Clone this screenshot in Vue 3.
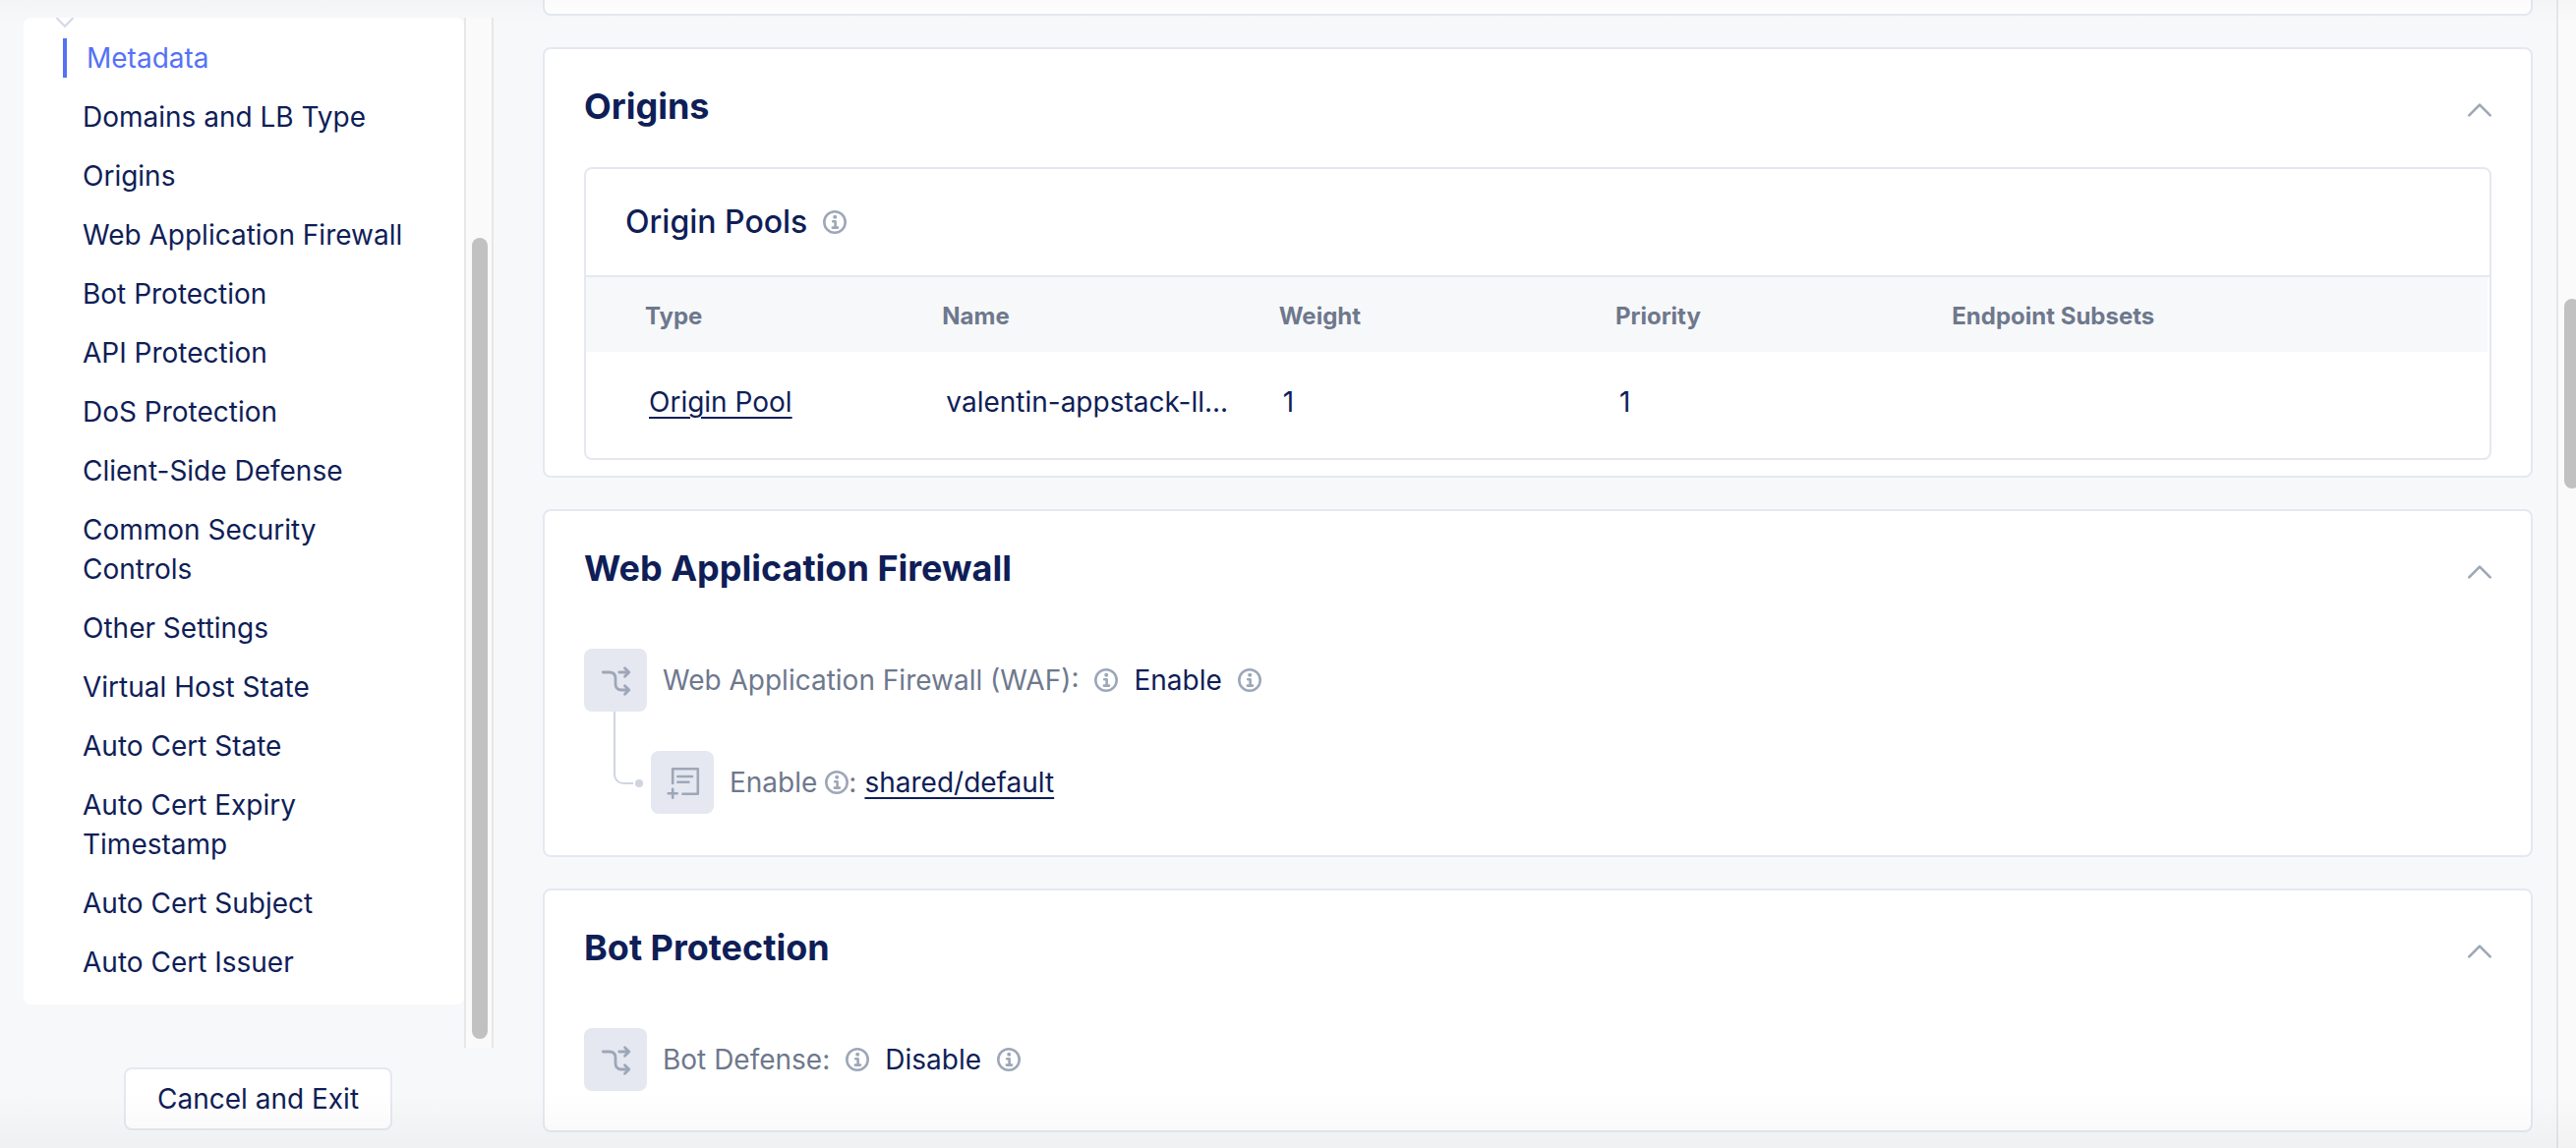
<script setup>
import { h } from 'vue'

const links = [
  'Metadata',
  'Domains and LB Type',
  'Origins',
  'Web Application Firewall',
  'Bot Protection',
  'API Protection',
  'DoS Protection',
  'Client-Side Defense',
  'Common Security Controls',
  'Other Settings',
  'Virtual Host State',
  'Auto Cert State',
  'Auto Cert Expiry Timestamp',
  'Auto Cert Subject',
  'Auto Cert Issuer',
]
const active = 'Metadata'

const columns = ['Type', 'Name', 'Weight', 'Priority', 'Endpoint Subsets']
const pools = [
  { type: 'Origin Pool', name: 'valentin-appstack-ll...', weight: 1, priority: 1, subsets: '' },
]

const slug = (text) => text.toLowerCase().replace(/[^a-z]+/g, '-')

const line = { fill: 'none', stroke: 'currentColor', 'stroke-linecap': 'round', 'stroke-linejoin': 'round' }

const InfoIcon = () =>
  h('svg', { width: 24, height: 24, viewBox: '0 0 24 24', 'aria-hidden': 'true' }, [
    h('circle', { ...line, cx: 12, cy: 12, r: 10.7, 'stroke-width': 2.6 }),
    h('circle', { cx: 12.2, cy: 6.8, r: 2, fill: 'currentColor' }),
    h('path', { ...line, d: 'M10.2 11.3h2.4v6.2M9.8 17.6h5.2', 'stroke-width': 2.6 }),
  ])

const ChevronIcon = () =>
  h('svg', { width: 24, height: 14, viewBox: '0 0 24 14', 'aria-hidden': 'true' }, [
    h('path', { ...line, d: 'M1.3 12.3L12 1.6l10.7 10.7', 'stroke-width': 2.6 }),
  ])

const BranchIcon = () =>
  h('svg', { width: 64, height: 64, viewBox: '0 0 64 64', 'aria-hidden': 'true' }, [
    h('path', {
      ...line,
      d: 'M19.3 24h6.5c4.2 0 6.2 2 6.2 6.200v5.600c0 4.200 2 6.200 6.200 6.200h7M41.500 37.800l4.300 4.200-4.300 4.200M35.800 24h10M41.500 19.800l4.300 4.200-4.300 4.200',
      'stroke-width': 2.8,
    }),
  ])

const FormIcon = () =>
  h('svg', { width: 64, height: 64, viewBox: '0 0 64 64', 'aria-hidden': 'true' }, [
    h('path', {
      ...line,
      d: 'M22.2 33V18.2h25.6v25.6H32.4M27.3 26h14.7M27.3 31.8h11.2M22.2 38.7v9M17.7 43.3h9',
      'stroke-width': 2.6,
    }),
  ])
</script>

<template>
  <div class="app">
    <aside class="side">
      <div class="scroller">
        <nav class="panel" aria-label="Sections">
          <svg class="fold" width="18" height="11" viewBox="0 0 18 11" aria-hidden="true">
            <path d="M0.5 0L9 8.8 17.5 0" fill="none" stroke="currentColor" stroke-width="2" />
          </svg>
          <ul class="links">
            <li v-for="item in links" :key="item">
              <a :href="'#' + slug(item)" :class="{ active: item === active }">{{ item }}</a>
            </li>
          </ul>
        </nav>
        <div class="track"><div class="thumb"></div></div>
      </div>
      <button type="button" class="cancel">Cancel and Exit</button>
    </aside>

    <main class="main">
      <section class="card stub"></section>

      <section id="origins" class="card tight">
        <header class="head">
          <h2>Origins</h2>
          <button type="button" class="toggle" aria-label="Collapse Origins"><ChevronIcon /></button>
        </header>
        <div class="pools">
          <h3 class="pools-title">Origin Pools <InfoIcon class="info" /></h3>
          <table>
            <thead>
              <tr>
                <th v-for="col in columns" :key="col" scope="col">{{ col }}</th>
              </tr>
            </thead>
            <tbody>
              <tr v-for="pool in pools" :key="pool.name">
                <td><a href="#pool">{{ pool.type }}</a></td>
                <td>{{ pool.name }}</td>
                <td>{{ pool.weight }}</td>
                <td>{{ pool.priority }}</td>
                <td>{{ pool.subsets }}</td>
              </tr>
            </tbody>
          </table>
        </div>
      </section>

      <section id="web-application-firewall" class="card">
        <header class="head">
          <h2>Web Application Firewall</h2>
          <button type="button" class="toggle" aria-label="Collapse Web Application Firewall"><ChevronIcon /></button>
        </header>
        <div class="fields">
          <div class="field">
            <span class="tile"><BranchIcon /></span>
            <span class="label">Web Application Firewall (WAF):</span>
            <InfoIcon class="info" />
            <span class="value">Enable</span>
            <InfoIcon class="info" />
          </div>
          <div class="field child">
            <span class="elbow"></span>
            <span class="tile"><FormIcon /></span>
            <span class="label inline">Enable <InfoIcon class="info" /><span>:</span></span>
            <a href="#policy">shared/default</a>
          </div>
        </div>
      </section>

      <section id="bot-protection" class="card short">
        <header class="head">
          <h2>Bot Protection</h2>
          <button type="button" class="toggle" aria-label="Collapse Bot Protection"><ChevronIcon /></button>
        </header>
        <div class="fields">
          <div class="field">
            <span class="tile"><BranchIcon /></span>
            <span class="label">Bot Defense:</span>
            <InfoIcon class="info" />
            <span class="value">Disable</span>
            <InfoIcon class="info" />
          </div>
        </div>
      </section>
    </main>

    <div class="page-track"><div class="page-thumb"></div></div>
  </div>
</template>

<style>
body {
  margin: 0;
  background: #f7f8fa;
}
</style>

<style scoped>
.app {
  position: relative;
  display: flex;
  min-height: 100vh;
  overflow: hidden;
  font-family: Inter, "Liberation Sans", sans-serif;
  font-size: 28px;
  line-height: 40px;
  color: #0f1e57;
  background: #f7f8fa;
}
.app::before,
.app::after {
  content: "";
  position: absolute;
  left: 0;
  right: 0;
  z-index: 1;
  pointer-events: none;
}
.app::before {
  top: 0;
  height: 24px;
  background: linear-gradient(rgba(0, 0, 0, 0.015), rgba(0, 0, 0, 0));
}
.app::after {
  bottom: 0;
  height: 56px;
  background: linear-gradient(rgba(0, 0, 0, 0), rgba(0, 0, 0, 0.03));
}
a {
  color: inherit;
  text-decoration: underline;
  text-decoration-thickness: 2px;
  text-underline-offset: 5px;
}
button {
  font: inherit;
  color: inherit;
  cursor: pointer;
}
svg {
  display: block;
}

/* Sidebar */
.side {
  flex: 0 0 502px;
  box-sizing: border-box;
  padding: 18px 0 18px 24px;
}
.scroller {
  display: flex;
}
.panel {
  flex: 1;
  margin-bottom: 44px;
  padding-bottom: 23px;
  border-radius: 8px;
  background: #fff;
}
.fold {
  margin-left: 33px;
  color: #d5d8e5;
}
.links {
  display: flex;
  flex-direction: column;
  gap: 20px;
  margin: 10px 0 0 40px;
  padding: 0;
  list-style: none;
}
.links a {
  display: block;
  padding: 0 44px 0 20px;
  text-decoration: none;
}
.links a.active {
  border-left: 4px solid #5472f5;
  color: #5472f5;
}
.track {
  box-sizing: border-box;
  width: 30px;
  padding: 224px 4px 9px 6px;
  border: solid #e7e7e7;
  border-width: 0 2px;
  background: #fafafa;
}
.thumb {
  width: 16px;
  height: 100%;
  border-radius: 8px;
  background: #c1c1c1;
}
.cancel {
  display: block;
  height: 64px;
  margin: 20px 0 0 102px;
  padding: 0 32px;
  border: 2px solid #e5e8f1;
  border-radius: 8px;
  background: #fff;
}

/* Cards */
.main {
  flex: 1;
  min-width: 0;
  display: flex;
  flex-direction: column;
  gap: 32px;
  margin: 0 24px 0 50px;
}
.card {
  box-sizing: border-box;
  padding: 34px 40px 42px;
  border: 2px solid #e5e8f1;
  border-radius: 8px;
  background: #fff;
}
.card.stub {
  height: 16px;
  padding: 0;
  border-top: 0;
  border-radius: 0 0 8px 8px;
}
.card.tight {
  padding-bottom: 16px;
}
.card.short {
  padding-bottom: 40px;
}
.head {
  display: flex;
  align-items: center;
  justify-content: space-between;
  height: 48px;
}
h2 {
  margin: 0;
  font-size: 36px;
  font-weight: 700;
  line-height: 48px;
}
.toggle {
  margin: 8px 0 0;
  padding: 0;
  border: 0;
  background: none;
  color: #9ea7b8;
}
.pools {
  margin-top: 38px;
  border: 2px solid #e5e8f1;
  border-radius: 8px;
}
.pools-title {
  display: flex;
  align-items: center;
  gap: 16px;
  height: 108px;
  margin: 0;
  padding-left: 40px;
  border-bottom: 2px solid #e5e8f1;
  font-size: 32px;
  font-weight: 500;
}
.info {
  flex: none;
  color: #9ea7b8;
}
table {
  width: calc(100% - 2px);
  table-layout: fixed;
  border-collapse: collapse;
}
th {
  width: 17.7%;
  height: 76px;
  box-sizing: border-box;
  padding: 4px 20px 0;
  background: #f7f8fa;
  font-size: 24px;
  font-weight: 700;
  line-height: 32px;
  text-align: left;
  color: #6e788d;
}
th:last-child {
  width: auto;
}
td {
  height: 108px;
  box-sizing: border-box;
  padding: 0 4px 6px 24px;
  white-space: nowrap;
}
th:first-child {
  padding-left: 60px;
}
td:first-child {
  padding-left: 64px;
}

/* Field rows */
.fields {
  margin-top: 58px;
  display: flex;
  flex-direction: column;
  gap: 40px;
}
.field {
  display: flex;
  align-items: center;
  gap: 16px;
}
.tile {
  flex: none;
  width: 64px;
  height: 64px;
  border-radius: 8px;
  background: #e5e8f1;
  color: #9ea7b8;
}
.label {
  color: #6e788d;
}
.label.inline {
  display: flex;
  align-items: center;
}
.label.inline .info {
  margin-left: 8px;
}
.child {
  position: relative;
  margin-left: 68px;
}
.child a {
  margin-left: -8px;
}
.elbow {
  position: absolute;
  left: -38px;
  top: -40px;
  width: 18px;
  height: 72px;
  border: solid #d0d4e2;
  border-width: 0 0 2px 2px;
  border-bottom-left-radius: 10px;
}
.elbow::after {
  content: "";
  position: absolute;
  right: -10px;
  bottom: -5px;
  width: 8px;
  height: 8px;
  border-radius: 50%;
  background: #d0d4e2;
}

/* Page scrollbar */
.page-track {
  flex: 0 0 20px;
  min-width: 0;
  overflow: hidden;
  box-sizing: border-box;
  padding: 304px 0 0 6px;
  border-left: 2px solid #e7e7e7;
  background: #fafafa;
}
.page-thumb {
  width: 16px;
  height: 193px;
  border-radius: 8px;
  background: #c1c1c1;
}
</style>
